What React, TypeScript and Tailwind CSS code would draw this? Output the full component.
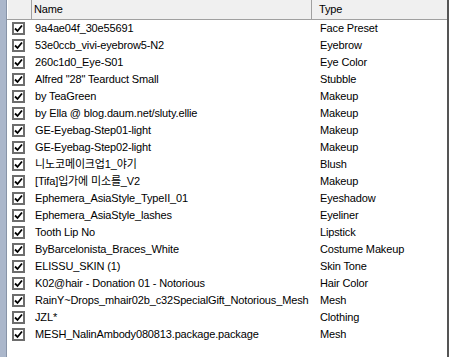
const items: [string, string][] = [
  ['9a4ae04f_30e55691', 'Face Preset'],
  ['53e0ccb_vivi-eyebrow5-N2', 'Eyebrow'],
  ['260c1d0_Eye-S01', 'Eye Color'],
  ['Alfred "28" Tearduct Small', 'Stubble'],
  ['by TeaGreen', 'Makeup'],
  ['by Ella @ blog.daum.net/sluty.ellie', 'Makeup'],
  ['GE-Eyebag-Step01-light', 'Makeup'],
  ['GE-Eyebag-Step02-light', 'Makeup'],
  ['니노코메이크업1_야기', 'Blush'],
  ['[Tifa]입가에 미소를_V2', 'Makeup'],
  ['Ephemera_AsiaStyle_TypeII_01', 'Eyeshadow'],
  ['Ephemera_AsiaStyle_lashes', 'Eyeliner'],
  ['Tooth Lip No', 'Lipstick'],
  ['ByBarcelonista_Braces_White', 'Costume Makeup'],
  ['ELISSU_SKIN (1)', 'Skin Tone'],
  ['K02@hair - Donation 01 - Notorious', 'Hair Color'],
  ['RainY~Drops_mhair02b_c32SpecialGift_Notorious_Mesh', 'Mesh'],
  ['JZL*', 'Clothing'],
  ['MESH_NalinAmbody080813.package.package', 'Mesh'],
];

const CheckBox = () => (
  <div className="w-[13px] h-[13px] border-2 border-[#6d6d6d] bg-white flex items-center justify-center">
    <svg width="9" height="9" viewBox="0 0 9 9">
      <path d="M1 4.5 L3.5 7 L8 1.5" stroke="#000" strokeWidth="1.8" fill="none" />
    </svg>
  </div>
);

export default function App() {
  return (
    <div
      className="w-[449px] h-[357px] flex bg-white overflow-hidden text-[11px] tracking-[-0.15px] text-black"
      style={{ fontFamily: '"Liberation Sans", "Noto Sans CJK KR", sans-serif' }}
    >
      <div className="w-[7px] shrink-0 bg-[#abb7cb] border-r border-[#8894a8]" />
      <div className="flex-1 flex flex-col min-w-0">
        {/* header */}
        <div className="h-[20px] flex bg-[#f0f0f0] border-b border-[#a0a0a0] shrink-0">
          <div className="w-[25px] border-r border-[#a0a0a0] border-l border-l-white" />
          <div className="w-[280px] border-r border-[#a0a0a0] pl-[2px] flex items-center">Name</div>
          <div className="flex-1 pl-[7px] flex items-center">Type</div>
        </div>
        {/* rows */}
        <div>
          {items.map(([name, type]) => (
            <div key={name} className="h-[17px] flex items-center">
              <div className="w-[25px] pl-[5px] flex items-center">
                <CheckBox />
              </div>
              <div className="w-[280px] pl-[3px] whitespace-nowrap">{name}</div>
              <div className="flex-1 pl-[8px] whitespace-nowrap">{type}</div>
            </div>
          ))}
        </div>
      </div>
      <div className="w-[2px] shrink-0 bg-[#555]" />
    </div>
  );
}
